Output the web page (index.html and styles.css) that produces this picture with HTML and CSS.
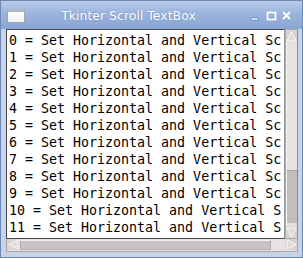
FILE: index.html
```html
<!DOCTYPE html>
<html>
<head>
<meta charset="utf-8">
<link rel="stylesheet" href="styles.css">
</head>
<body>
<div class="window">
  <div class="titlebar">
    <div class="appicon"></div>
    <div class="title">Tkinter Scroll TextBox</div>
    <div class="controls">
      <svg width="46" height="14" viewBox="0 0 46 14">
        <rect x="3" y="9" width="7" height="2" fill="#fff" stroke="#5a78a8" stroke-width="0.5"/>
        <rect x="19.5" y="3.5" width="8" height="7" fill="none" stroke="#fff" stroke-width="2"/>
        <path d="M35 3 L42 10 M42 3 L35 10" stroke="#fff" stroke-width="2.2"/>
      </svg>
    </div>
  </div>
  <div class="client">
    <div class="text">
      <div class="lines">
        <div class="line">0 = Set Horizontal and Vertical Scrollbars</div>
        <div class="line">1 = Set Horizontal and Vertical Scrollbars</div>
        <div class="line">2 = Set Horizontal and Vertical Scrollbars</div>
        <div class="line">3 = Set Horizontal and Vertical Scrollbars</div>
        <div class="line">4 = Set Horizontal and Vertical Scrollbars</div>
        <div class="line">5 = Set Horizontal and Vertical Scrollbars</div>
        <div class="line">6 = Set Horizontal and Vertical Scrollbars</div>
        <div class="line">7 = Set Horizontal and Vertical Scrollbars</div>
        <div class="line">8 = Set Horizontal and Vertical Scrollbars</div>
        <div class="line">9 = Set Horizontal and Vertical Scrollbars</div>
        <div class="line">10 = Set Horizontal and Vertical Scrollbars</div>
        <div class="line">11 = Set Horizontal and Vertical Scrollbars</div>
      </div>
    </div>
    <div class="vsb">
      <div class="arrow">
        <svg width="11" height="11" viewBox="0 0 11 11"><path d="M1 10 L5.5 1 L10 10 Z" fill="#dcdcdc" stroke="#f8f8f8" stroke-width="1"/></svg>
      </div>
      <div class="vtrough">
        <div class="vspace"></div>
        <div class="vthumb"></div>
      </div>
      <div class="arrow">
        <svg width="11" height="11" viewBox="0 0 11 11"><path d="M1 1 L5.5 10 L10 1 Z" fill="#dcdcdc" stroke="#f8f8f8" stroke-width="1"/></svg>
      </div>
    </div>
    <div class="hsb">
      <div class="harrow">
        <svg width="11" height="11" viewBox="0 0 11 11"><path d="M10 1 L1 5.5 L10 10 Z" fill="#dcdcdc" stroke="#f8f8f8" stroke-width="1"/></svg>
      </div>
      <div class="htrough"><div class="hthumb"></div></div>
      <div class="harrow">
        <svg width="11" height="11" viewBox="0 0 11 11"><path d="M1 1 L10 5.5 L1 10 Z" fill="#dcdcdc" stroke="#f8f8f8" stroke-width="1"/></svg>
      </div>
    </div>
  </div>
</div>
</body>
</html>
```
FILE: styles.css
```css
html, body {
  margin: 0;
  padding: 0;
  width: 303px;
  height: 258px;
  overflow: hidden;
  background: #8aa4cc;
}
.window {
  width: 303px;
  height: 258px;
  display: flex;
  flex-direction: column;
  background: linear-gradient(#b9cbe6, #95afd6);
  box-sizing: border-box;
  border: 1px solid #6d88b6;
}
.titlebar {
  height: 28px;
  flex: none;
  display: flex;
  align-items: center;
  background: linear-gradient(#b8cbe8 0%, #9cb5de 45%, #88a4d2 100%);
  padding-left: 6px;
  padding-right: 8px;
}
.appicon {
  width: 18px;
  height: 14px;
  box-sizing: border-box;
  border: 1px solid #9aa6b8;
  border-top: 3px solid #b0b8c6;
  background: linear-gradient(#ffffff, #eef0f4);
  margin-top: 2px;
}
.title {
  flex: 1;
  text-align: center;
  font-family: "DejaVu Sans", sans-serif;
  font-size: 12.5px;
  color: #ffffff;
  text-shadow: 0 0 2px #7f9bc8, 0 0 1px #6f8cbc;
  padding-right: 16px;
  padding-top: 1px;
}
.controls {
  display: flex;
  align-items: center;
  padding-top: 1px;
}
.controls svg path, .controls svg rect {
  filter: drop-shadow(0 0 0.6px #5a78a8);
}
.client {
  flex: 1;
  min-height: 0;
  display: grid;
  grid-template-columns: minmax(0, 1fr) 13px;
  grid-template-rows: minmax(0, 1fr) 13px;
  padding: 0 4px 5px 5px;
  background: #c6d3e8;
}
.text {
  grid-column: 1;
  grid-row: 1;
  min-height: 0;
  background: #ffffff;
  border: 1px solid #4a4a4a;
  border-right-color: #9a9a9a;
  padding: 2px 3px 0 2px;
  display: flex;
  flex-direction: column;
}
.lines {
  flex: 1;
  min-height: 0;
  overflow: hidden;
  font-family: "DejaVu Sans Mono", monospace;
  font-size: 13.3px;
  line-height: 17px;
  color: #000000;
}
.line { white-space: pre; }
.vsb {
  grid-column: 2;
  grid-row: 1;
  min-height: 0;
  display: flex;
  flex-direction: column;
  background: #e4e0e0;
  border: 1px solid #a8a8a8;
  border-right-color: #8c8c8c;
}
.arrow, .harrow {
  flex: none;
  width: 11px;
  height: 11px;
  display: flex;
  align-items: center;
  justify-content: center;
  background: #d8d4d4;
}
.arrow { height: 12px; }
.vtrough {
  flex: 1;
  display: flex;
  flex-direction: column;
  background: #e6e2e2;
  border-left: 1px solid #f6f4f4;
}
.vspace { flex: 1; }
.vthumb {
  height: 52px;
  flex: none;
  background: #c2bebe;
  border-top: 1px solid #a0a0a0;
  margin-bottom: 3px;
}
.hsb {
  grid-column: 1 / 3;
  grid-row: 2;
  display: flex;
  background: #e4e0e0;
  border: 1px solid #a8a8a8;
  border-top: none;
}
.harrow { width: 12px; height: 11px; }
.htrough {
  flex: 1;
  display: flex;
  padding: 1px 14px 1px 1px;
  background: #e6e2e2;
}
.hthumb {
  flex: 1;
  background: #c8c4c4;
  border: 1px solid #b0acac;
  border-top-color: #f2f0f0;
}
```
